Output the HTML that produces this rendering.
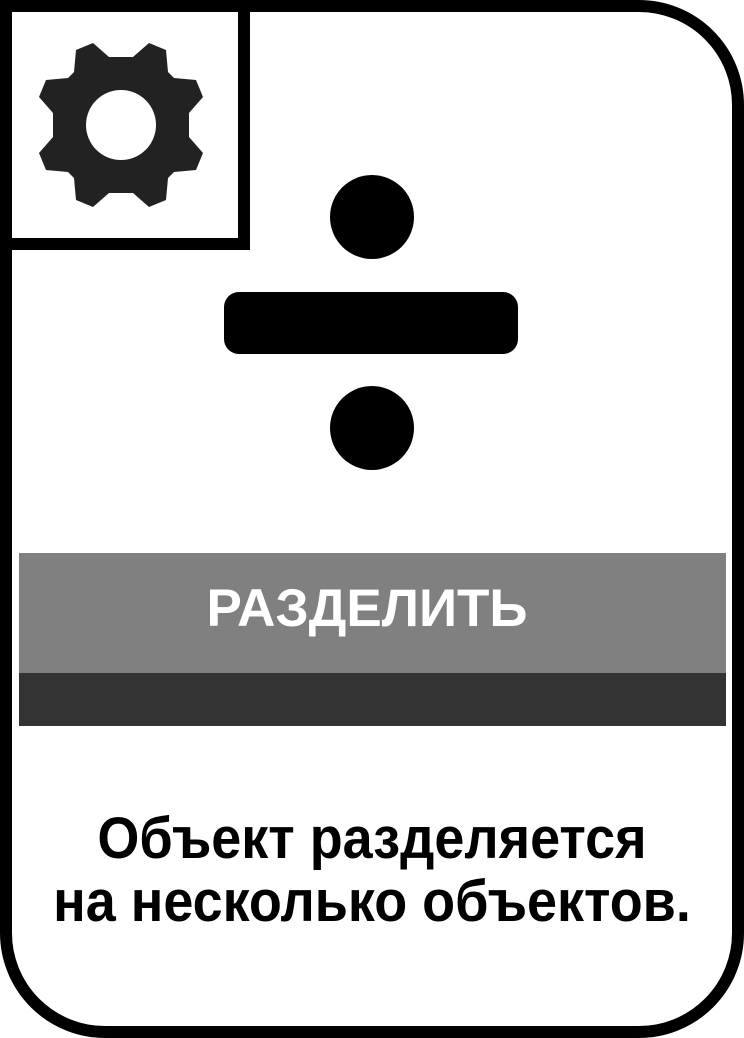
<!DOCTYPE html>
<html><head><meta charset="utf-8"><style>
body{margin:0;width:744px;height:1038px;background:#fff;overflow:hidden;position:relative;font-family:"Liberation Sans",sans-serif}
.card{position:absolute;left:0;top:0;width:720px;height:1014px;border:12px solid #000;border-radius:0 105px 105px 105px;background:#fff}
.box{position:absolute;left:0;top:0;width:238px;height:238px;border-right:12px solid #000;border-bottom:12px solid #000}
.gray{position:absolute;left:19px;top:553px;width:707px;height:120px;background:#808080}
.dark{position:absolute;left:19px;top:673px;width:707px;height:53px;background:#333}
.t{position:absolute;left:0;width:744px;text-align:center;font-weight:bold;white-space:nowrap}
</style></head><body>
<div class="card"></div>
<div class="box"></div>
<svg style="position:absolute;left:0;top:0" width="744" height="1038">
<g transform="translate(121,125)" fill="#222">
<path fill-rule="evenodd" d="M-12,-68 L12,-68 L28,-82 L45,-75 L47,-53 L53,-47 L75,-45 L82,-28 L68,-12 L68,12 L82,28 L75,45 L53,47 L47,53 L45,75 L28,82 L12,68 L-12,68 L-28,82 L-45,75 L-47,53 L-53,47 L-75,45 L-82,28 L-68,12 L-68,-12 L-82,-28 L-75,-45 L-53,-47 L-47,-53 L-45,-75 L-28,-82 Z M35,0 A35,35 0 1 0 -35,0 A35,35 0 1 0 35,0 Z"/>
</g>
<circle cx="372" cy="217" r="42" fill="#000"/>
<rect x="224" y="292" width="294" height="62" rx="15" fill="#000"/>
<circle cx="372" cy="428" r="42" fill="#000"/>
</svg>
<div class="gray"></div><div class="dark"></div>
<div class="t" style="top:582px;left:-5px;font-size:53px;line-height:53px;color:#fff;transform:scaleX(1.0)">РАЗДЕЛИТЬ</div>
<div class="t" style="top:807px;font-size:58px;color:#000;line-height:63px;transform:scaleX(0.93)">Объект разделяется<br>на несколько объектов.</div>
</body></html>
